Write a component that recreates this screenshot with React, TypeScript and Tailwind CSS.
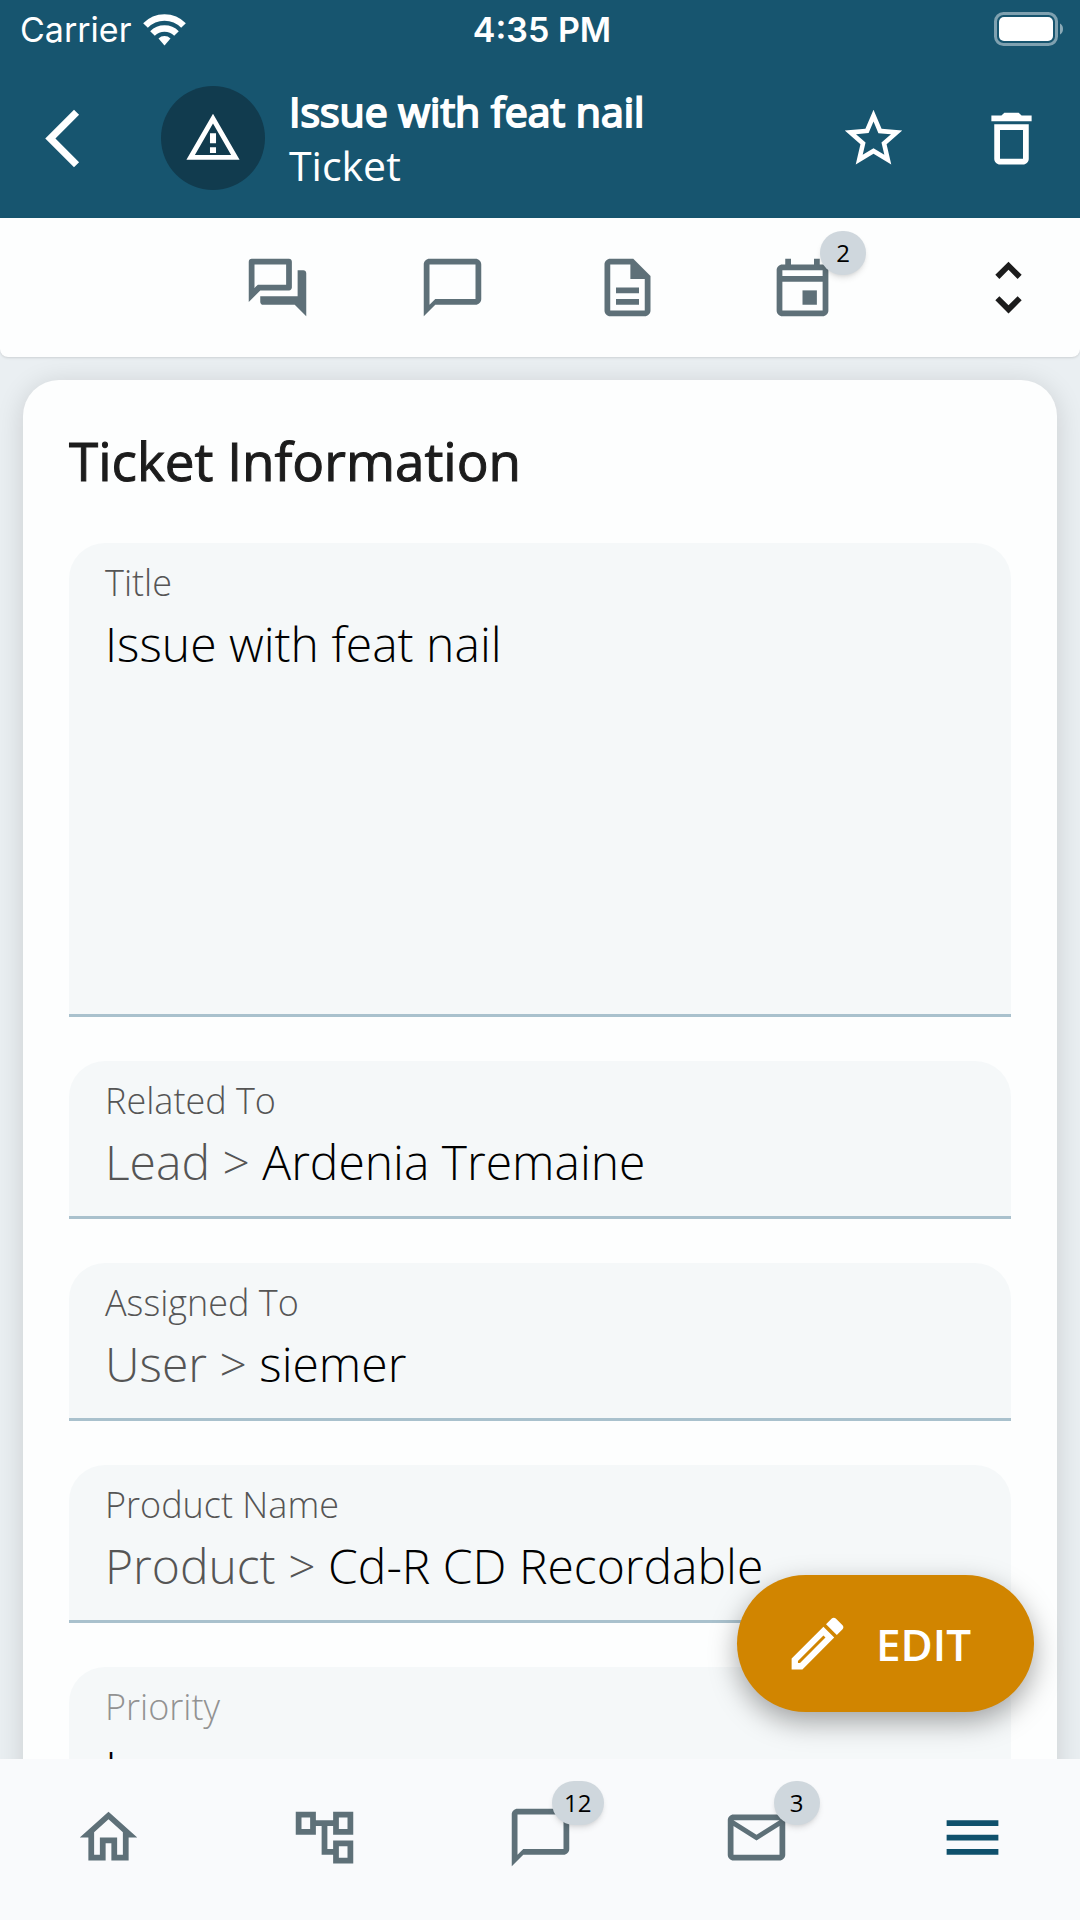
import type { ReactNode } from "react";
import type { IconType } from "react-icons";
import {
  MdArrowBackIosNew,
  MdChatBubbleOutline,
  MdDeleteOutline,
  MdMailOutline,
  MdMenu,
  MdOutlineAccountTree,
  MdOutlineHome,
  MdOutlineQuestionAnswer,
  MdStarBorder,
  MdUnfoldMore,
} from "react-icons/md";

interface IconItem {
  label: string;
  icon: ReactNode;
  badge?: number;
}

const icon = (Icon: IconType) => <Icon className="size-[69px]" />;

function DocumentIcon() {
  return (
    <svg viewBox="0 0 24 24" fill="currentColor" className="size-[69px]">
      <path d="M8 16h8v2H8zm0-4h8v2H8zm6-10H6c-1.100 0-2 .9-2 2v16c0 1.100.89 2 1.990 2H18c1.100 0 2-.9 2-2V8l-6-6zm4 18H6V4h7v5h5v11z" />
    </svg>
  );
}

function EventIcon() {
  return (
    <svg viewBox="0 0 24 24" fill="currentColor" className="size-[69px]">
      <path d="M19 4h-1V2h-2v2H8V2H6v2H5c-1.110 0-1.990.9-1.990 2L3 20c0 1.100.89 2 2 2h14c1.100 0 2-.9 2-2V6c0-1.100-.9-2-2-2zm0 16H5V10h14v10zm0-12H5V6h14v2z" />
      <path d="M12 13h5v5h-5z" />
    </svg>
  );
}

function WarningIcon() {
  return (
    <svg viewBox="0 0 24 24" fill="currentColor" className="size-[58px]">
      <path d="M12 2L1 21h22L12 2zm0 4l7.500 13h-15L12 6z" />
      <path d="M10.750 10h2.500v4.200h-2.500zM10.750 15.800h2.500v2.400h-2.500z" />
    </svg>
  );
}

function PencilIcon() {
  return (
    <svg viewBox="0 0 24 24" fill="currentColor" className="size-[69px]">
      <path d="M14.060 6.190L3 17.250V21h3.750L17.810 9.940l-3.750-3.750zM5.920 18.800H5.200v-.72l8.860-8.860.72.72L5.920 18.800z" />
      <path d="M20.710 5.630l-2.340-2.340c-.2-.2-.45-.29-.71-.29s-.51.1-.7.290l-1.990 1.990 3.750 3.750 1.990-1.990c.39-.39.39-1.020 0-1.410z" />
    </svg>
  );
}

function WifiIcon() {
  return (
    <svg viewBox="0 0 43 33" className="h-[33px] w-[43px]">
      <g fill="none" stroke="currentColor" strokeWidth="6.5">
        <path d="M2.500 12.500a26.500 26.500 0 0 1 38 0" />
        <path d="M9.500 20.500a17 17 0 0 1 24 0" />
      </g>
      <path d="M21.500 32.500l-6-7a8.500 8.500 0 0 1 12 0z" fill="currentColor" />
    </svg>
  );
}

function BatteryIcon() {
  return (
    <svg viewBox="0 0 70 34" className="h-[34px] w-[70px]">
      <rect x="1.500" y="1.500" width="61" height="31" rx="8" fill="none" stroke="white" strokeOpacity=".45" strokeWidth="3" />
      <rect x="5" y="5" width="54" height="24" rx="5" fill="white" />
      <path d="M66 11.500c4 2 4 9 0 11z" fill="white" fillOpacity=".5" />
    </svg>
  );
}

const tools: IconItem[] = [
  { label: "Conversations", icon: icon(MdOutlineQuestionAnswer) },
  { label: "Comments", icon: icon(MdChatBubbleOutline) },
  { label: "Documents", icon: <DocumentIcon /> },
  { label: "Events", icon: <EventIcon />, badge: 2 },
];

const navItems: IconItem[] = [
  { label: "Home", icon: icon(MdOutlineHome) },
  { label: "Modules", icon: icon(MdOutlineAccountTree) },
  { label: "Messages", icon: icon(MdChatBubbleOutline), badge: 12 },
  { label: "Mail", icon: icon(MdMailOutline), badge: 3 },
];

const relations = [
  { label: "Related To", type: "Lead", name: "Ardenia Tremaine" },
  { label: "Assigned To", type: "User", name: "siemer" },
  { label: "Product Name", type: "Product", name: "Cd-R CD Recordable" },
];

function BadgedIcon({ item }: { item: IconItem }) {
  return (
    <span className="relative">
      {item.icon}
      {item.badge && (
        <span className="absolute -top-[22px] -right-[29px] flex h-11 min-w-[46px] items-center justify-center rounded-full bg-[#cfd7dd] px-3 text-2xl text-black shadow-md">
          {item.badge}
        </span>
      )}
    </span>
  );
}

const fieldClass =
  "flex flex-col rounded-t-[36px] border-b-[3px] border-[#a9c1cd] bg-[#f5f8f9] px-9 pt-4";
const labelClass = "text-[36px] leading-[48px] font-light text-[#555]";
const valueClass = "text-[48px] leading-[74px] font-light text-black";

export default function App() {
  return (
    <div className="flex h-screen flex-col overflow-hidden bg-[#eaeff2] font-['Open_Sans',sans-serif]">
      <header className="bg-[#17556f] text-white">
        <div className="grid h-[58px] grid-cols-3 items-center pr-4 pl-5 font-[Inter,sans-serif]">
          <div className="flex items-center gap-3 text-[34px]">
            <span>Carrier</span>
            <WifiIcon />
          </div>
          <span className="text-center text-[34px] font-semibold">4:35 PM</span>
          <span className="justify-self-end">
            <BatteryIcon />
          </span>
        </div>
        <div className="flex h-40 items-center pr-[34px] pl-7">
          <button type="button" aria-label="Back">
            <MdArrowBackIosNew className="size-[69px]" />
          </button>
          <span className="ml-16 flex size-[104px] items-center justify-center rounded-full bg-[#113b4e]">
            <WarningIcon />
          </span>
          <div className="ml-6 flex-1">
            <h1 className="text-[41px] leading-[54px] [-webkit-text-stroke:2px_white]">
              Issue with feat nail
            </h1>
            <p className="text-[41px] leading-[54px]">Ticket</p>
          </div>
          <button type="button" aria-label="Favourite">
            <MdStarBorder className="size-[69px]" />
          </button>
          <button type="button" aria-label="Delete" className="ml-[69px]">
            <MdDeleteOutline className="size-[69px]" />
          </button>
        </div>
      </header>

      <div className="z-10 flex h-[139px] shrink-0 items-center justify-end rounded-b-lg bg-[#fdfefe] shadow-sm">
        <div className="flex text-[#5e7078]">
          {tools.map((item) => (
            <button key={item.label} type="button" aria-label={item.label} className="flex w-[175px] justify-center">
              <BadgedIcon item={item} />
            </button>
          ))}
        </div>
        <button type="button" aria-label="Expand" className="ml-[46px] flex w-36 justify-center text-[#1c1c1c]">
          <MdUnfoldMore className="size-[69px]" />
        </button>
      </div>

      <main className="relative min-h-0 flex-1">
        <div className="h-full overflow-hidden px-[23px] pt-[23px]">
          <section className="rounded-[36px] bg-[#fdfefe] px-[46px] pt-[46px] pb-12 shadow-[0_4px_28px_rgba(0,0,0,0.14)]">
            <h2 className="text-[53px] leading-[70px] text-[#1c1c1c] [-webkit-text-stroke:1px_#1c1c1c]">
              Ticket Information
            </h2>
            <div className="mt-[47px] flex flex-col gap-11">
              <div className={`${fieldClass} h-[474px]`}>
                <label htmlFor="title" className={labelClass}>
                  Title
                </label>
                <textarea
                  id="title"
                  readOnly
                  defaultValue="Issue with feat nail"
                  className={`${valueClass} flex-1 resize-none outline-none`}
                />
              </div>
              {relations.map((field) => (
                <div key={field.label} className={`${fieldClass} h-[158px]`}>
                  <span className={labelClass}>{field.label}</span>
                  <p className={valueClass}>
                    <span className="text-[#555]">{field.type} &gt; </span>
                    <a href="#">{field.name}</a>
                  </p>
                </div>
              ))}
              <div className={`${fieldClass} h-[158px]`}>
                <span className="text-[36px] leading-[48px] font-light text-[#929292]">Priority</span>
                <p className={valueClass}>Low</p>
              </div>
            </div>
          </section>
        </div>
        <button
          type="button"
          className="absolute right-[46px] bottom-[47px] flex h-[137px] w-[297px] items-center gap-6 rounded-full bg-[#d18500] pl-[46px] text-[44px] font-semibold text-white shadow-[0_10px_28px_rgba(0,0,0,0.35)]"
        >
          <PencilIcon />
          EDIT
        </button>
      </main>

      <nav className="z-10 grid h-[161px] shrink-0 grid-cols-5 items-center bg-[#f9fafc] pb-1 text-[#5e7078]">
        {navItems.map((item) => (
          <a key={item.label} href="#" aria-label={item.label} className="flex justify-center">
            <BadgedIcon item={item} />
          </a>
        ))}
        <button type="button" aria-label="Menu" className="flex justify-center text-[#0f506c]">
          <MdMenu className="size-[69px]" />
        </button>
      </nav>
    </div>
  );
}
